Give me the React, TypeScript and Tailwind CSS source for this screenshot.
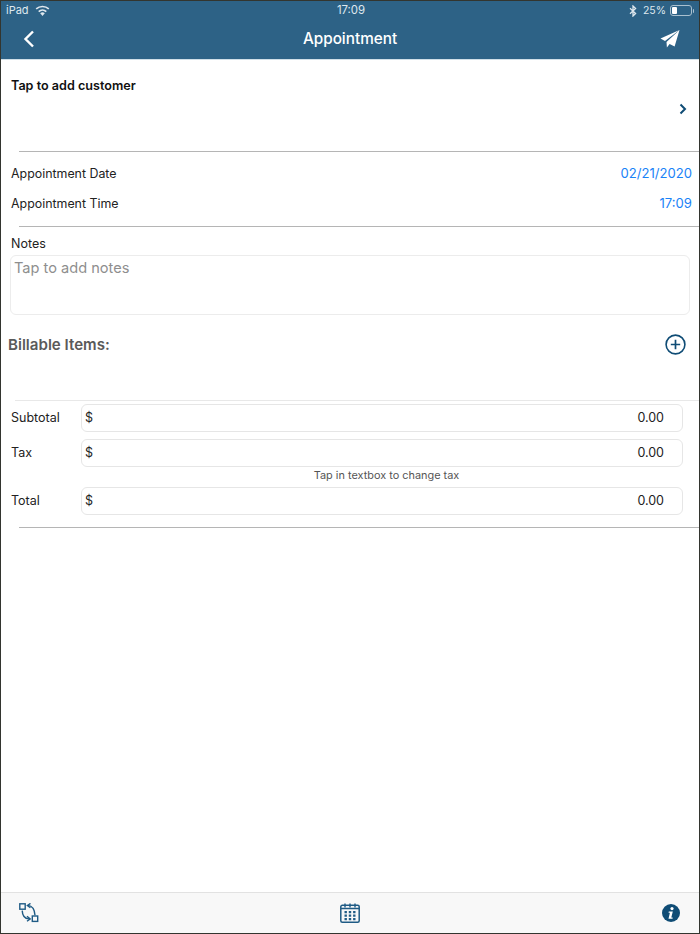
import React from 'react';

const NAVY = '#0f4c75';

function WifiIcon() {
  return (
    <svg width="15" height="11" viewBox="0 0 15 11" className="text-[#dfe8ee]">
      <path d="M7.5 11 5.2 8.3a3.4 3.4 0 0 1 4.6 0L7.5 11Z" fill="currentColor" />
      <path d="M3.7 6.6a5.6 5.6 0 0 1 7.6 0" stroke="currentColor" strokeWidth="1.6" fill="none" />
      <path d="M1.2 3.9a9.3 9.3 0 0 1 12.6 0" stroke="currentColor" strokeWidth="1.6" fill="none" />
    </svg>
  );
}

function BluetoothIcon() {
  return (
    <svg width="8" height="12" viewBox="0 0 8 12" fill="none" stroke="#dfe8ee" strokeWidth="1.3" className="mr-[2px]">
      <path d="M1 3.2 6.6 8.4 4 11V1l2.6 2.6L1 8.8" />
    </svg>
  );
}

function BatteryIcon() {
  return (
    <div className="flex items-center">
      <div className="flex h-[11px] w-[22px] items-stretch rounded-[3px] border border-[#a9c0cf] p-px">
        <div className="w-[5px] rounded-[1px] bg-white" />
      </div>
      <div className="ml-px h-1 w-px rounded-r-sm bg-[#a9c0cf]" />
    </div>
  );
}

function SendIcon() {
  return (
    <svg width="20" height="18" viewBox="0 0 20 18" fill="white">
      <path d="M19.5 0 0.5 8.6 5 11 19.5 0Z" />
      <path d="M19.5 0 6.5 12 6.9 17.5 9.6 14 14.6 16.6 19.5 0Z" />
    </svg>
  );
}

function PlusCircleIcon() {
  return (
    <svg width="21" height="21" viewBox="0 0 21 21" fill="none" stroke={NAVY}>
      <circle cx="10.5" cy="10.5" r="9.4" strokeWidth="1.6" />
      <path d="M10.5 5.8v9.4M5.8 10.5h9.4" strokeWidth="1.7" />
    </svg>
  );
}

function SwitchIcon() {
  return (
    <svg width="20" height="20" viewBox="0 0 20 20" fill="none" stroke="#1f5b85" strokeWidth="1.4">
      <rect x="0.8" y="0.8" width="5.4" height="5.4" />
      <rect x="13.3" y="13" width="5.4" height="5.4" />
      <path d="M9 2.4c3.6.4 6.5 3.2 7 9.8" />
      <path d="M11.5 0.4 8.4 2.5l3 2.2" />
      <path d="M3.2 7.6c.2 5 2.6 8 6.8 8.3" />
      <path d="M8 13.3l3.2 2.6L8 18.2" />
    </svg>
  );
}

function CalendarIcon() {
  return (
    <svg width="20" height="20" viewBox="0 0 20 20" fill="none">
      <rect x="0.8" y="2.3" width="18.4" height="16.9" rx="1.5" stroke="#1f5b85" strokeWidth="1.5" />
      <path d="M0.8 5.5h18.4" stroke="#1f5b85" strokeWidth="1.5" />
      <path d="M5 0.4v4M10 0.4v4M15 0.4v4" stroke="#1f5b85" strokeWidth="1.4" />
      <path
        d="M4.5 8h2.400v2.200H4.500ZM8.800 8h2.400v2.200H8.800ZM13.100 8h2.400v2.200h-2.400ZM4.500 11.500h2.400v2.200H4.500ZM8.800 11.500h2.400v2.200H8.800ZM13.100 11.500h2.400v2.200h-2.400ZM4.500 15h2.400v2.200H4.500ZM8.800 15h2.400v2.200H8.800ZM13.100 15h2.400v2.200h-2.400Z"
        fill="#1f5b85"
      />
    </svg>
  );
}

function InfoIcon() {
  return (
    <svg width="19" height="18" viewBox="-1 0 19 18">
      <circle cx="9" cy="9" r="9" fill={NAVY} />
      <circle cx="10" cy="4.600" r="1.600" fill="white" />
      <path d="M6.800 7.600h4l-1.500 5.900h1.300v1.200H6.500l1.400-5.900H6.500Z" fill="white" />
    </svg>
  );
}

function AmountRow({ label }: { label: string }) {
  return (
    <div className="flex items-center pr-4">
      <div className="w-[80px] pl-[10px] text-[12.5px] text-[#222]">{label}</div>
      <div className="flex h-[28px] flex-1 items-center justify-between rounded-md border border-[#e6e6e6] pl-[3px] pr-[18px] text-[12.5px] text-[#222]">
        <span>$</span>
        <span>0.00</span>
      </div>
    </div>
  );
}

export default function App() {
  return (
    <div className="flex h-[934px] w-[700px] flex-col border border-[#33352f] bg-white font-['Inter',sans-serif]">
      <header className="h-[59px] shrink-0 border-b border-[#cfdfe8] bg-[#2d6286] text-white">
        <div className="flex h-[19px] items-center justify-between pl-[5px] pr-[5px] text-[11px] text-[#dfe8ee]">
          <div className="flex w-[202px] items-center gap-[6px]">
            <span>iPad</span>
            <WifiIcon />
          </div>
          <span className="text-[11.4px]">17:09</span>
          <div className="flex w-[200px] items-center justify-end gap-[4px]">
            <BluetoothIcon />
            <span className="text-[10.5px]">25%</span>
            <BatteryIcon />
          </div>
        </div>
        <div className="flex h-[38px] items-center justify-between pl-[22px] pr-[19px]">
          <div className="w-[17px]">
            <svg width="12" height="18" viewBox="0 0 12 18" fill="none" stroke="white" strokeWidth="2.4">
              <path d="M10 1.500 2.500 9l7.500 7.500" />
            </svg>
          </div>
          <span className="text-[15.3px] font-medium">Appointment</span>
          <SendIcon />
        </div>
      </header>

      <main className="flex-1">
        <section className="h-[91px]">
          <div className="px-[10px] pt-[18px] text-[12.6px] font-semibold leading-4 text-[#111]">Tap to add customer</div>
          <div className="flex justify-end pr-[12px] pt-[9px]">
            <svg width="8" height="12" viewBox="0 0 8 12" fill="none" stroke={NAVY} strokeWidth="2">
              <path d="M1.500 1.500 6 6l-4.500 4.500" />
            </svg>
          </div>
        </section>
        <div className="ml-[18px] h-px bg-[#b5b5b5]" />

        <section className="flex h-[74px] flex-col pt-[7px] text-[12.4px] text-[#222]">
          <div className="flex h-[30px] items-center justify-between pl-[10px] pr-[7px]">
            <span>Appointment Date</span>
            <span className="text-[13.1px] text-[#1a82f7]">02/21/2020</span>
          </div>
          <div className="flex h-[30px] items-center justify-between pl-[10px] pr-[7px]">
            <span>Appointment Time</span>
            <span className="text-[13.1px] text-[#1a82f7]">17:09</span>
          </div>
        </section>
        <div className="ml-[18px] h-px bg-[#b5b5b5]" />

        <section className="px-[9px] pt-[8px]">
          <div className="pl-px text-[12.5px] leading-[17px] text-[#222]">Notes</div>
          <div className="mt-[3px] h-[60px] rounded-md border border-[#ececec] px-[3px] pt-[2px] text-[14.6px] leading-[20px] text-[#8e8e8e]">
            Tap to add notes
          </div>
        </section>

        <section className="flex h-[58px] items-center justify-between pl-[7px] pr-[13px]">
          <span className="pt-[3px] text-[15.1px] font-semibold text-[#5a5a5a]">Billable Items:</span>
          <PlusCircleIcon />
        </section>

        <div className="ml-[14px] mt-[27px] h-px bg-[#e8e8e8]" />
        <section className="pt-[3px]">
          <AmountRow label="Subtotal" />
          <div className="mt-[7px]">
            <AmountRow label="Tax" />
          </div>
          <div className="h-[20px] pl-[73px] text-center text-[10.9px] leading-[16px] text-[#555]">Tap in textbox to change tax</div>
          <AmountRow label="Total" />
        </section>
        <div className="ml-[18px] mt-3 h-px bg-[#b5b5b5]" />
      </main>

      <footer className="flex h-[41px] shrink-0 items-center justify-between border-t border-[#e2e2e2] bg-[#f8f8f8] pl-[18px] pr-[19px]">
        <SwitchIcon />
        <CalendarIcon />
        <InfoIcon />
      </footer>
    </div>
  );
}
